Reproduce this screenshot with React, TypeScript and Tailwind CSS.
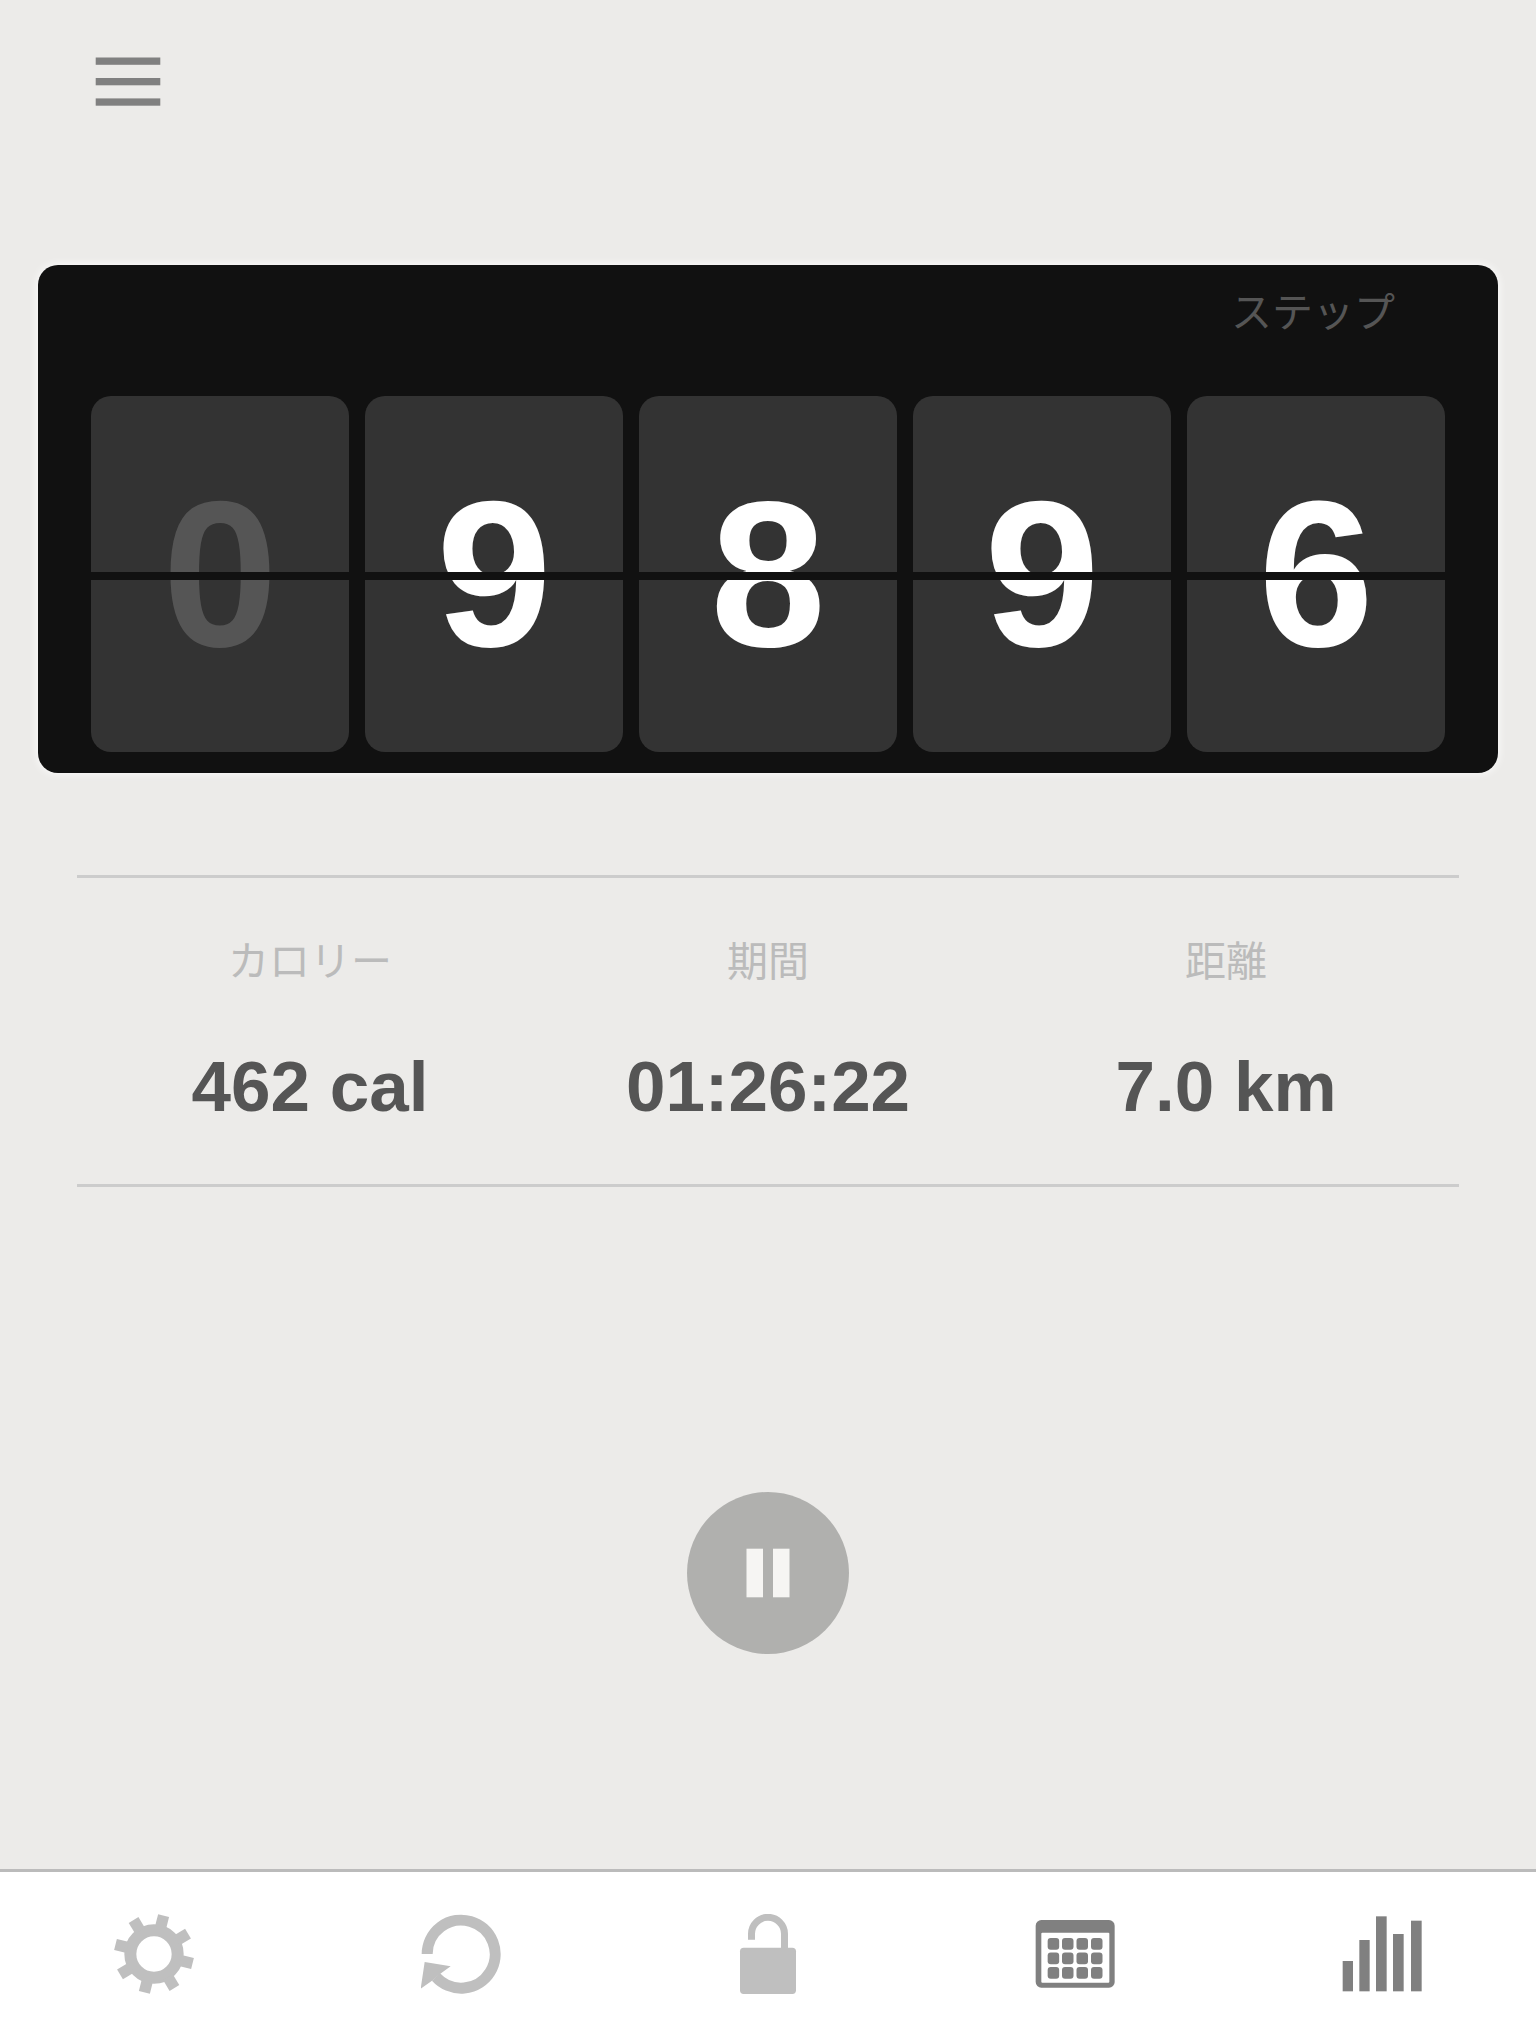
import type { ReactNode } from 'react'

interface Stat {
  label: string
  value: string
}

interface NavItem {
  name: string
  icon: ReactNode
  active: boolean
}

const stats: Stat[] = [
  { label: 'カロリー', value: '462 cal' },
  { label: '期間', value: '01:26:22' },
  { label: '距離', value: '7.0 km' },
]

const STEP_DIGITS = 5
const GEAR_ANGLES = [14, 59, 104, 149, 194, 239, 284, 329]

function MenuIcon() {
  return (
    <svg width="66" height="50" viewBox="0 0 66 50" fill="currentColor" aria-hidden="true">
      <rect x="0.7" y="0.5" width="64.6" height="7.3" />
      <rect x="0.7" y="21" width="64.6" height="7.3" />
      <rect x="0.7" y="41.4" width="64.6" height="7.3" />
    </svg>
  )
}

function PauseIcon() {
  return (
    <svg width="44" height="50" viewBox="0 0 44 50" fill="currentColor" aria-hidden="true">
      <rect x="0.5" y="0.7" width="16.5" height="48.6" />
      <rect x="27" y="0.7" width="16.5" height="48.6" />
    </svg>
  )
}

function GearIcon() {
  return (
    <svg width="80" height="80" viewBox="-120 -120 240 240" fill="currentColor" aria-hidden="true">
      <circle r="71" fill="none" stroke="currentColor" strokeWidth="36" />
      {GEAR_ANGLES.map((angle) => (
        <rect key={angle} x="-17" y="-119" width="34" height="38" transform={`rotate(${angle})`} />
      ))}
    </svg>
  )
}

function ResetIcon() {
  return (
    <svg width="80" height="80" viewBox="64 71 240 240" fill="currentColor" aria-hidden="true">
      <path d="M82.500 191A102 102 0 1 1 109 260" fill="none" stroke="currentColor" strokeWidth="33" />
      <path d="M75 215L153 228L122 250L97 271L63 295Z" />
    </svg>
  )
}

function UnlockIcon() {
  return (
    <svg width="80" height="80" viewBox="24 72 240 240" fill="currentColor" aria-hidden="true">
      <path d="M94.5 149V131.5a49.5 49.5 0 0 1 99 0V178" fill="none" stroke="currentColor" strokeWidth="21" />
      <rect x="60" y="173" width="168" height="139" rx="11" />
    </svg>
  )
}

function CalendarIcon() {
  return (
    <svg width="80" height="80" viewBox="46 72 240 240" fill="currentColor" aria-hidden="true">
      <rect x="48" y="90" width="237" height="203" rx="17" />
      <rect x="65" y="128" width="204" height="150" rx="3" fill="#fff" />
      {[144, 187.5, 231].map((y) =>
        [84, 127, 170.5, 214].map((x) => (
          <rect key={`${x}-${y}`} x={x} y={y} width="34.5" height="35" rx="9" />
        ))
      )}
    </svg>
  )
}

function ChartIcon() {
  return (
    <svg width="80" height="80" viewBox="967 72 240 240" fill="currentColor" aria-hidden="true">
      <rect x="969" y="213" width="31" height="91" />
      <rect x="1019" y="150" width="31" height="154" />
      <rect x="1069" y="79" width="32" height="225" />
      <rect x="1120" y="132" width="32" height="172" />
      <rect x="1174" y="92" width="32" height="212" />
    </svg>
  )
}

const navItems: NavItem[] = [
  { name: '設定', icon: <GearIcon />, active: false },
  { name: 'リセット', icon: <ResetIcon />, active: false },
  { name: 'ロック', icon: <UnlockIcon />, active: false },
  { name: 'カレンダー', icon: <CalendarIcon />, active: true },
  { name: 'グラフ', icon: <ChartIcon />, active: true },
]

function FlipDigit({ digit, dimmed }: { digit: string; dimmed: boolean }) {
  return (
    <div className="relative flex h-[356px] items-center justify-center overflow-hidden rounded-[20px] bg-[#333]">
      <span className={`text-[208px] leading-none font-bold ${dimmed ? 'text-[#555]' : 'text-white'}`}>
        {digit}
      </span>
      {/* hinge between the two flaps */}
      <div className="absolute inset-x-0 top-[176px] h-2 bg-[#111]" />
    </div>
  )
}

function StepCounter({ steps }: { steps: number }) {
  const digits = String(steps).padStart(STEP_DIGITS, '0').split('')
  const leadingZeros = STEP_DIGITS - String(steps).length

  return (
    <section className="mx-[38px] rounded-[20px] bg-[#111] px-[53px] pt-[18px] pb-[21px] shadow-[0_0_10px_#fff]">
      <h2 className="h-[113px] pr-[50px] text-right text-[41px] leading-[60px] font-normal text-[#555]">ステップ</h2>
      <div className="grid grid-cols-5 gap-4">
        {digits.map((digit, i) => (
          <FlipDigit key={i} digit={digit} dimmed={i < leadingZeros} />
        ))}
      </div>
    </section>
  )
}

export default function App() {
  return (
    <div className="flex min-h-screen flex-col bg-[#ecebe9] font-['Liberation_Sans','Noto_Sans_CJK_JP',sans-serif]">
      <header className="h-[265px] px-[95px] pt-[57px]">
        <button type="button" aria-label="メニュー" className="block text-[#808080]">
          <MenuIcon />
        </button>
      </header>

      <main className="flex flex-1 flex-col">
        <StepCounter steps={9896} />

        <dl className="mx-[77px] mt-[102px] grid grid-cols-3 border-y-3 border-[#ccc] px-1 pt-[54px] pb-[57px] text-center">
          {stats.map((stat) => (
            <div key={stat.label}>
              <dt className="text-[41px] leading-[60px] text-[#bbb]">{stat.label}</dt>
              <dd className="mt-[55px] text-[71px] leading-[80px] font-bold text-[#555]">{stat.value}</dd>
            </div>
          ))}
        </dl>

        <div className="flex flex-1 items-center justify-center pt-[90px]">
          <button
            type="button"
            aria-label="一時停止"
            className="flex size-[162px] items-center justify-center rounded-full bg-[#b0b0ae] text-[#f6f5f3]"
          >
            <PauseIcon />
          </button>
        </div>
      </main>

      <nav className="grid h-[167px] grid-cols-5 border-t-3 border-[#bbb] bg-white">
        {navItems.map((item) => (
          <button
            key={item.name}
            type="button"
            aria-label={item.name}
            className={`flex items-center justify-center ${item.active ? 'text-[#808080]' : 'text-[#bfbfbf]'}`}
          >
            {item.icon}
          </button>
        ))}
      </nav>
    </div>
  )
}
